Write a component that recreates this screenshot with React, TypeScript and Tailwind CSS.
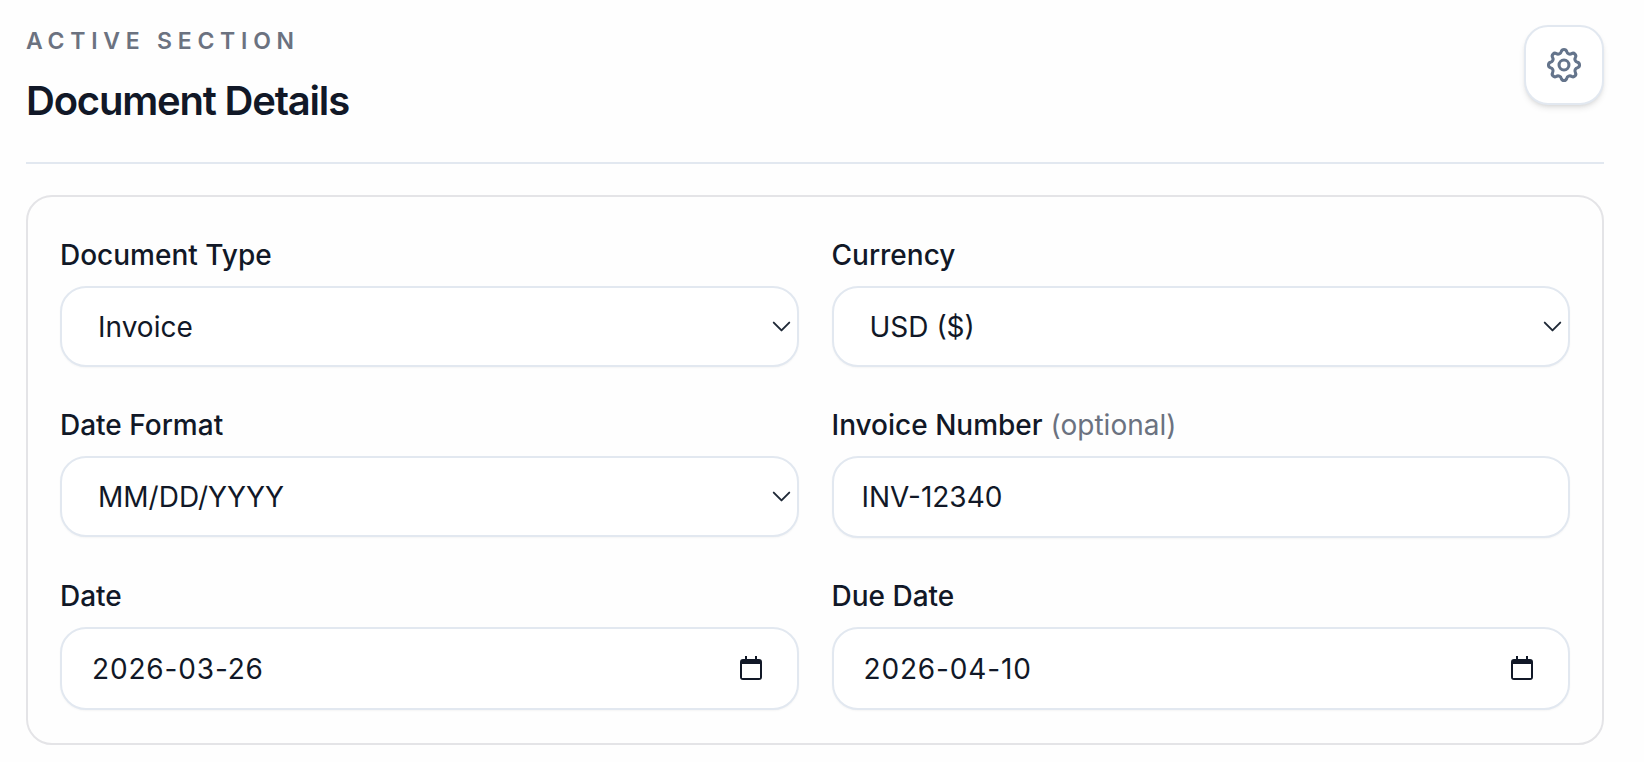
import { ChevronDown } from 'lucide-react';

const labelCls = 'block text-[28px] leading-[38px] font-medium text-[#111827] mb-[12px]';
const fieldCls =
  'block w-full rounded-[26px] border-2 border-[#e2e8f0] bg-white text-[28px] text-[#111827] shadow-[0_1px_2px_rgba(0,0,0,0.04)] outline-none';

// 8 lobes: convex arc over each tooth, concave arc between teeth
const gearPath = (() => {
  const step = Math.PI / 8;
  const pt = (a: number) => `${(20 + 12.5 * Math.sin(a)).toFixed(2)} ${(20 - 12.5 * Math.cos(a)).toFixed(2)}`;
  let d = `M${pt(-step / 2)}`;
  for (let i = 0; i < 8; i++) {
    const a = (i * Math.PI) / 4;
    d += `A2.54 2.54 0 0 1 ${pt(a + step / 2)}A3 3 0 0 0 ${pt(a + step * 1.5)}`;
  }
  return d + 'Z';
})();

function Field({ label, hint, children }: { label: string; hint?: string; children: React.ReactNode }) {
  return (
    <div>
      <label className={labelCls}>
        {label}
        {hint && <span className="ml-2 font-normal text-[#6b7280]">{hint}</span>}
      </label>
      {children}
    </div>
  );
}

function SelectField({ value }: { value: string }) {
  return (
    <div className="relative">
      <select className={`${fieldCls} h-[81px] appearance-none pl-[36px]`} defaultValue={value}>
        <option>{value}</option>
      </select>
      <ChevronDown className="pointer-events-none absolute top-[25px] right-[2px] h-[31px] w-[31px] text-[#1f2937]" strokeWidth={1.5} />
    </div>
  );
}

function DateField({ value }: { value: string }) {
  return (
    <div className="relative">
      <input className={`${fieldCls} h-[83px] px-[30px] tracking-[0.03em]`} defaultValue={value} />
      <svg className="pointer-events-none absolute top-[29px] right-[37px] h-[24px] w-[22px]" viewBox="0 0 22 24">
        <path d="M5 0h2v3h8V0h2v3h2a3 3 0 0 1 3 3v15a3 3 0 0 1-3 3H3a3 3 0 0 1-3-3V6a3 3 0 0 1 3-3h2z" fill="#111827" />
        <rect x="2" y="8" width="18" height="14" fill="#fff" />
      </svg>
    </div>
  );
}

export default function App() {
  return (
    <div className="min-h-screen bg-[#fefefe] pr-[40px] pl-[26px] pt-[24px] font-['Inter',sans-serif]">
      <div className="flex items-start justify-between border-b-2 border-[#e2e8f0] pb-[35px]">
        <div>
          <p className="pt-px text-[23px] leading-[32px] font-semibold tracking-[0.25em] text-[#6b7280]">ACTIVE SECTION</p>
          <h1 className="mt-[18px] text-[40px] leading-[52px] font-semibold tracking-[-0.03em] text-[#111827]">Document Details</h1>
        </div>
        <button className="mt-px flex h-[80px] w-[80px] items-center justify-center rounded-[24px] border-2 border-[#e2e8f0] bg-white shadow-md">
          <svg className="h-[44px] w-[44px] text-[#64748b]" viewBox="0 0 40 40" fill="none" stroke="currentColor" strokeWidth={2.8} strokeLinejoin="round">
            <path d={gearPath} />
            <circle cx="20" cy="20" r="4.5" />
          </svg>
        </button>
      </div>

      <div className="mt-[31px] grid grid-cols-2 gap-x-[33px] gap-y-[39px] rounded-[26px] border-2 border-[#e4e4e7] px-[32px] pt-[39px] pb-[33px]">
        <Field label="Document Type">
          <SelectField value="Invoice" />
        </Field>
        <Field label="Currency">
          <SelectField value="USD ($)" />
        </Field>
        <Field label="Date Format">
          <SelectField value="MM/DD/YYYY" />
        </Field>
        <Field label="Invoice Number" hint="(optional)">
          <input className={`${fieldCls} h-[82px] px-[28px]`} defaultValue="INV-12340" />
        </Field>
        <Field label="Date">
          <DateField value="2026-03-26" />
        </Field>
        <Field label="Due Date">
          <DateField value="2026-04-10" />
        </Field>
      </div>
    </div>
  );
}
